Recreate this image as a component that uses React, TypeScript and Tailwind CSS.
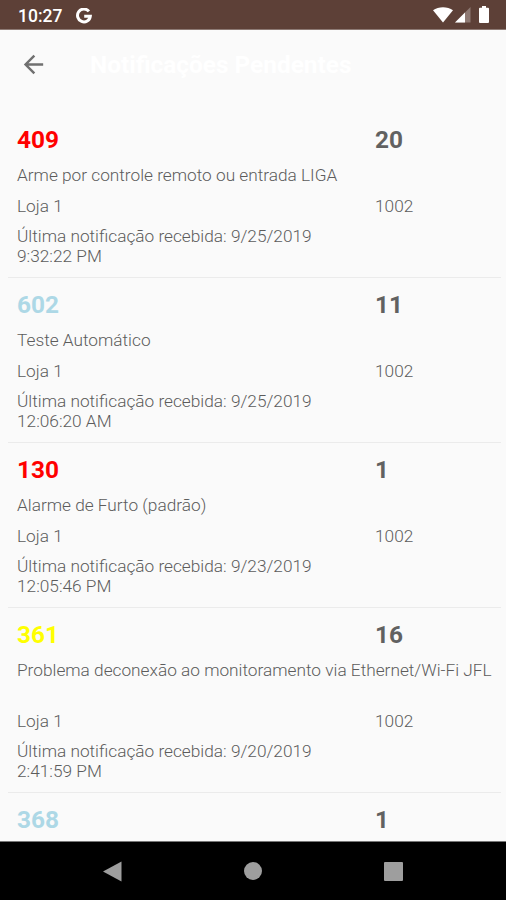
interface Notification {
  id: number;
  code: string;
  codeColor: string;
  count: number;
  details?: {
    description: string;
    place: string;
    account: string;
    receivedAt: string;
  };
  tall?: boolean;
}

const notifications: Notification[] = [
  {
    id: 1,
    code: "409",
    codeColor: "text-[#ff0000]",
    count: 20,
    details: {
      description: "Arme por controle remoto ou entrada LIGA",
      place: "Loja 1",
      account: "1002",
      receivedAt: "9/25/2019 9:32:22 PM"
    }
  },
  {
    id: 2,
    code: "602",
    codeColor: "text-[#add8e6]",
    count: 11,
    details: {
      description: "Teste Automático",
      place: "Loja 1",
      account: "1002",
      receivedAt: "9/25/2019 12:06:20 AM"
    }
  },
  {
    id: 3,
    code: "130",
    codeColor: "text-[#ff0000]",
    count: 1,
    details: {
      description: "Alarme de Furto (padrão)",
      place: "Loja 1",
      account: "1002",
      receivedAt: "9/23/2019 12:05:46 PM"
    }
  },
  {
    id: 4,
    code: "361",
    codeColor: "text-[#ffff00]",
    count: 16,
    tall: true,
    details: {
      description: "Problema deconexão ao monitoramento via Ethernet/Wi-Fi JFL",
      place: "Loja 1",
      account: "1002",
      receivedAt: "9/20/2019 2:41:59 PM"
    }
  },
  {
    id: 5,
    code: "368",
    codeColor: "text-[#add8e6]",
    count: 1
  }
];

function StatusBar() {
  return (
    <div className="h-[30px] shrink-0 bg-[#5d4037] border-b border-[#8d7a74] flex items-center justify-between pl-[18px] pr-[17px] text-white">
      <div className="flex items-center gap-[14px]">
        <span className="text-[17.5px] leading-5 font-medium pt-[3px]">10:27</span>
        <svg width="16" height="16" viewBox="0 0 16 16" fill="none" stroke="currentColor" strokeWidth="3" className="mt-[2px]">
          <path d="M12.9 3.4A6.4 6.4 0 1 0 14.3 8.2H8.2" />
        </svg>
      </div>
      <div className="flex items-center">
        <svg width="20" height="16" viewBox="0 0 20 16" fill="currentColor">
          <path d="M0 3.2C5.5-.9 14.5-.9 20 3.2L10 15.6Z" />
        </svg>
        <svg width="16" height="16" viewBox="0 0 16 16" fill="currentColor" className="ml-[2px] mt-px">
          <path d="M15.5 0V15.5H0Z" opacity="0.3" />
          <path d="M10 5.5V15.5H0Z" />
        </svg>
        <svg width="10" height="17" viewBox="0 0 10 17" fill="currentColor" className="ml-[8px]">
          <path d="M3 0H7V1.8H9Q10 1.8 10 2.8V16Q10 17 9 17H1Q0 17 0 16V2.8Q0 1.8 1 1.8H3Z" />
        </svg>
      </div>
    </div>
  );
}

function NotificationRow({ item }: { item: Notification }) {
  return (
    <li className={`shrink-0 ml-[8px] mr-[5px] pl-[9px] pt-[13px] border-b border-[#ebebeb] ${item.tall ? "h-[185px]" : "h-[165px]"}`}>
      <div className="flex text-[24.4px] leading-7 font-bold">
        <span className={`w-[358px] ${item.codeColor}`}>{item.code}</span>
        <span className="text-[#616161]">{item.count}</span>
      </div>
      {item.details && (
        <>
          <p className={`mt-[11px] whitespace-nowrap ${item.tall ? "h-[40px]" : "h-[20px]"}`}>{item.details.description}</p>
          <div className="mt-[11px] flex">
            <span className="w-[358px]">{item.details.place}</span>
            <span>{item.details.account}</span>
          </div>
          <p className="mt-[9px] w-[340px]">Última notificação recebida: {item.details.receivedAt}</p>
        </>
      )}
    </li>
  );
}

function NavigationBar() {
  return (
    <div className="h-[59px] shrink-0 bg-black border-t border-[#777777] flex items-center justify-between pl-[103px] pr-[103px] text-[#9e9e9e]">
      <svg width="19" height="21" viewBox="0 0 19 21" fill="currentColor">
        <path d="M18.5 .5V20.5L0 10.5Z" />
      </svg>
      <div className="size-[18px] rounded-full bg-[#9e9e9e]" />
      <div className="size-[19px] rounded-[1px] bg-[#9e9e9e]" />
    </div>
  );
}

export default function App() {
  return (
    <div className="w-[506px] h-[900px] flex flex-col overflow-hidden bg-[#fafafa] font-[Roboto,sans-serif]">
      <StatusBar />
      <header className="h-[83px] shrink-0 flex items-start pt-[20px] pl-[19px]">
        <svg width="29" height="29" viewBox="0 0 24 24" fill="#707070">
          <path d="M20 11H7.83l5.59-5.59L12 4l-8 8 8 8 1.41-1.41L7.83 13H20v-2z" />
        </svg>
        <h1 className="mt-px ml-[42px] text-[24.4px] leading-7 font-bold text-white">Notificações Pendentes</h1>
      </header>
      <ul className="flex-1 min-h-0 overflow-hidden flex flex-col text-[17.25px] leading-[20.5px] font-light text-[#5c5c5c]">
        {notifications.map(item => (
          <NotificationRow key={item.id} item={item} />
        ))}
      </ul>
      <NavigationBar />
    </div>
  );
}
